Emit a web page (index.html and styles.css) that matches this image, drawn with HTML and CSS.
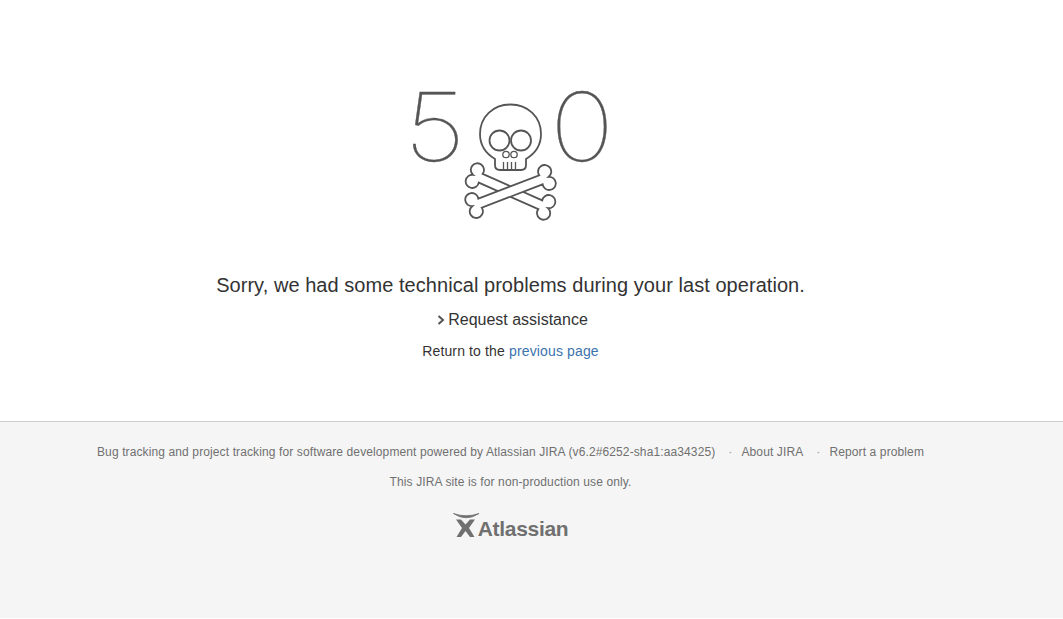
FILE: index.html
```html
<!DOCTYPE html>
<html>
<head>
    <title>500 - JIRA</title>
    <link rel="stylesheet" href="styles.css">
</head>
<body>
    <div class="error-page">
        <div class="error-image">
            <span class="digit five">5</span>
            <svg class="skull" width="97" height="150" viewBox="62 0 97 150">
                <defs>
                    <path id="bone" d="M-32.6,-4.8 H32.6 A6.6 6.6 0 1 1 41,0 A6.6 6.6 0 1 1 32.6,4.8 H-32.6 A6.6 6.6 0 1 1 -41,0 A6.6 6.6 0 1 1 -32.6,-4.8 Z"/>
                </defs>
                <!-- bones -->
                <use href="#bone" class="line" transform="translate(110.5 111.5) rotate(24)"/>
                <use href="#bone" class="line" transform="translate(110.5 111.5) rotate(-21)"/>
                <!-- skull -->
                <path class="line" d="M95,79 C85,73 80,64 80,54 C80,37 93,24.500 110.500,24.500 C128,24.500 141,37 141,54 C141,64 136,73 126,79 V85 Q126,90 121,90 H100 Q95,90 95,85 Z"/>
                <circle class="line" cx="99.500" cy="60.500" r="10"/>
                <circle class="line" cx="121" cy="60.500" r="10"/>
                <circle class="line thin" cx="106" cy="74.500" r="3.200"/>
                <circle class="line thin" cx="114" cy="74.500" r="3.200"/>
                <path class="line thin" d="M103.500,82 V90 M107.500,82 V90 M111.500,82 V90 M115.500,82 V90"/>
            </svg>
            <span class="digit zero">0</span>
        </div>
        <h1>Sorry, we had some technical problems during your last operation.</h1>
        <p class="assist"><svg class="chevron" width="8" height="10" viewBox="0 0 8 10"><path d="M1.500,1 L6,5 L1.500,9" /></svg>Request assistance</p>
        <p class="return">Return to the <a href="#">previous page</a></p>
    </div>
    <div class="footer">
        <div class="footer-body">
            <ul class="footer-links">
                <li>Bug tracking and project tracking for software development powered by Atlassian JIRA (v6.2#6252-sha1:aa34325)</li>
                <li><a href="#">About JIRA</a></li>
                <li><a href="#">Report a problem</a></li>
            </ul>
            <p class="license">This JIRA site is for non-production use only.</p>
            <div class="logo">
                <svg width="28" height="25" viewBox="0 0 28 25">
                    <path class="logo-arc" d="M0.500,0.500 Q13,9 26,0.500 Q13,5 0.500,0.500 Z" />
                    <path class="logo-man" d="M3,6.500 H8 L12.500,11.500 L17,6.500 H22 L16,15 L21.500,24 H17 L12.500,18 L8,24 H3.500 L9,15 Z"/>
                </svg>
                <span>Atlassian</span>
            </div>
        </div>
    </div>
</body>
</html>
```
FILE: styles.css
```css
html, body {
    height: 100%;
}

body {
    margin: 0;
    font-family: "Liberation Sans", Arial, sans-serif;
    color: #333;
    background-color: #fff;
    display: flex;
    flex-direction: column;
}

a {
    color: #3b73af;
    text-decoration: none;
}

/* content is centred on 1021px, not on the whole window */
.error-page {
    height: 421px;
    width: 1021px;
    box-sizing: border-box;
    padding-top: 80px;
    text-align: center;
}

.error-image {
    display: grid;
    grid-template-columns: 1fr auto 1fr;
    height: 150px;
}

.digit {
    font-family: "Inter", sans-serif;
    font-weight: 100;
    font-size: 95px;
    line-height: 94px;
    color: #555;
    -webkit-text-stroke: 0.3px #555;
    transform: scaleX(1.15);
}

.five {
    justify-self: end;
}

.zero {
    justify-self: start;
    margin-left: -5px;
}

.skull {
    display: block;
}

.line {
    fill: #fff;
    stroke: #555;
    stroke-width: 1.8;
}

.thin {
    stroke-width: 1.3;
}

h1 {
    margin: 43px 0 0;
    font-size: 20px;
    font-weight: normal;
    line-height: 24px;
    letter-spacing: 0.05px;
}

.assist {
    margin: 11px 0 0;
    padding-left: 4px;
    font-size: 16px;
    line-height: 24px;
}

.chevron {
    margin-right: 3px;
}

.chevron path {
    fill: none;
    stroke: #555;
    stroke-width: 2;
}

.return {
    margin: 7px 0 0;
    font-size: 14px;
    line-height: 24px;
    letter-spacing: 0.14px;
}

.footer {
    flex: 1;
    background-color: #f5f5f5;
    border-top: 1px solid #ccc;
    margin-bottom: 1px;
    font-size: 12px;
    color: #707070;
}

.footer a {
    color: #707070;
}

.footer-body {
    width: 1021px;
    text-align: center;
    letter-spacing: 0.116px;
}

.footer-links {
    display: flex;
    justify-content: center;
    list-style: none;
    margin: 22px 0 0;
    padding: 0;
    line-height: 16px;
}

.footer-links li + li::before {
    content: "\00b7";
    margin: 0 9px 0 13px;
    color: #999;
}

.license {
    margin: 14px 0 0;
    line-height: 16px;
}

.logo {
    display: flex;
    justify-content: center;
    align-items: flex-start;
    margin-top: 23px;
    color: #707070;
    letter-spacing: 0;
}

.logo svg {
    margin-right: -3px;
}

.logo span {
    font-weight: bold;
    font-size: 21px;
    line-height: 31px;
    letter-spacing: -0.3px;
}

.logo-arc,
.logo-man {
    fill: #707070;
}

.logo-arc {
    stroke: #707070;
    stroke-width: 0.8;
}
```
